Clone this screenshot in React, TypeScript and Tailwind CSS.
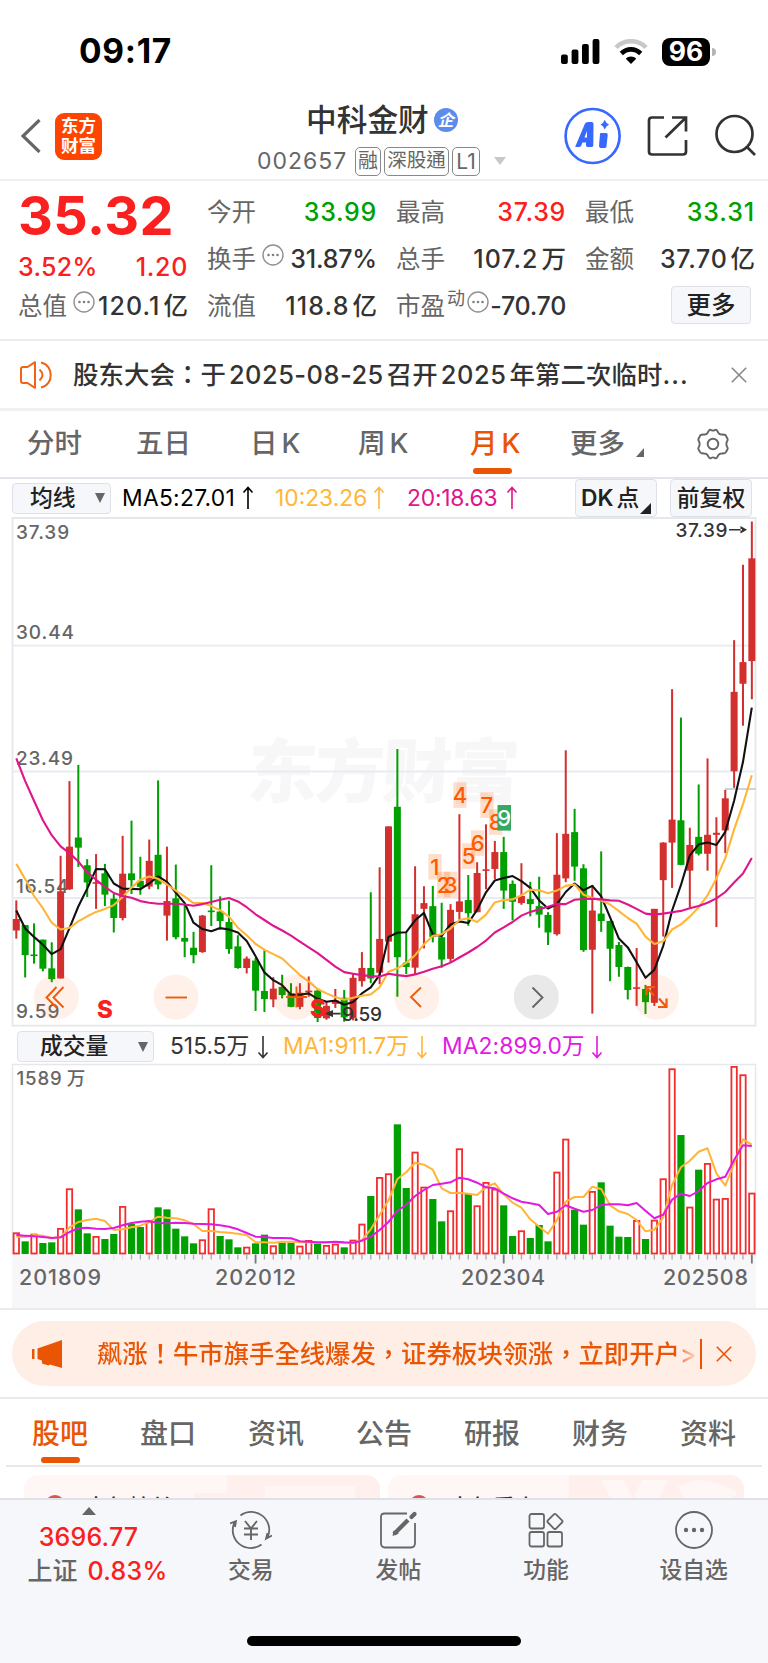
import React from "react";

const RED = "#d32f2f";
const GREEN = "#00a000";

/* [direction, high, bodyTop, bodyBottom, low] in chart sample units */
type Candle = [string, number, number, number, number];
const candles: Candle[] = [
  ["r", 1155, 1210, 1244, 1268], ["g", 1228, 1228, 1317, 1383], ["g", 1223, 1315, 1318, 1342], ["g", 1271, 1271, 1357, 1365],
  ["g", 1279, 1356, 1388, 1397], ["r", 1023, 1128, 1386, 1386], ["r", 802, 996, 1122, 1124], ["g", 754, 969, 999, 1056],
  ["g", 1033, 1051, 1102, 1145], ["r", 1018, 1101, 1104, 1180], ["g", 1047, 1075, 1138, 1172], ["g", 1135, 1150, 1207, 1250],
  ["r", 964, 1076, 1207, 1214], ["g", 919, 1075, 1095, 1136], ["g", 1026, 1097, 1115, 1138], ["r", 975, 1038, 1114, 1122],
  ["g", 800, 1020, 1108, 1122], ["r", 996, 1157, 1200, 1274], ["g", 1049, 1149, 1264, 1270], ["g", 1168, 1266, 1277, 1323],
  ["g", 1248, 1295, 1317, 1341], ["r", 1198, 1200, 1308, 1310], ["g", 1051, 1185, 1189, 1231], ["g", 1143, 1188, 1216, 1242],
  ["g", 1156, 1219, 1299, 1313], ["g", 1258, 1291, 1355, 1357], ["r", 1321, 1327, 1355, 1371], ["g", 1325, 1333, 1422, 1482],
  ["g", 1302, 1423, 1447, 1485], ["r", 1382, 1416, 1448, 1471], ["g", 1375, 1411, 1435, 1445], ["g", 1400, 1430, 1470, 1471],
  ["r", 1400, 1428, 1470, 1477], ["r", 1380, 1422, 1426, 1440], ["g", 1418, 1422, 1503, 1515], ["r", 1454, 1467, 1504, 1508],
  ["r", 1417, 1451, 1461, 1473], ["g", 1420, 1443, 1501, 1514], ["r", 1373, 1384, 1504, 1510], ["r", 1308, 1355, 1394, 1410],
  ["g", 1131, 1355, 1386, 1400], ["r", 1057, 1269, 1369, 1403], ["r", 936, 936, 1277, 1339], ["g", 707, 878, 1323, 1440],
  ["g", 1250, 1339, 1352, 1373], ["r", 1054, 1196, 1354, 1375], ["r", 1113, 1163, 1180, 1297], ["g", 1112, 1172, 1263, 1279],
  ["g", 1162, 1264, 1330, 1354], ["r", 1166, 1183, 1328, 1339], ["r", 900, 1158, 1189, 1217], ["g", 1080, 1154, 1193, 1230],
  ["r", 1042, 1074, 1190, 1190], ["r", 930, 1063, 1067, 1122], ["r", 979, 1012, 1062, 1092], ["g", 967, 1012, 1126, 1180],
  ["g", 1096, 1106, 1159, 1214], ["r", 1045, 1142, 1163, 1168], ["g", 1100, 1151, 1166, 1202], ["g", 1085, 1172, 1197, 1236],
  ["g", 1190, 1198, 1250, 1287], ["r", 956, 1079, 1255, 1259], ["r", 711, 958, 1090, 1101], ["g", 884, 953, 1055, 1097],
  ["g", 1048, 1060, 1302, 1307], ["r", 1110, 1185, 1301, 1490], ["g", 1010, 1194, 1216, 1248], ["g", 1215, 1216, 1298, 1394],
  ["g", 1278, 1287, 1352, 1381], ["g", 1351, 1352, 1420, 1448], ["r", 1296, 1412, 1416, 1467], ["g", 1405, 1417, 1456, 1491],
  ["r", 1180, 1180, 1458, 1467], ["r", 983, 984, 1095, 1262], ["r", 530, 916, 984, 1118], ["g", 614, 918, 1050, 1051],
  ["r", 940, 991, 1067, 1176], ["g", 812, 967, 1017, 1022], ["r", 735, 961, 1017, 1067], ["r", 909, 955, 961, 1234],
  ["r", 828, 853, 948, 1015], ["r", 385, 538, 773, 822], ["r", 162, 450, 514, 638], ["r", 34, 143, 447, 560],
];

const ma5 = [1185, 1238, 1263, 1286, 1314, 1299, 1237, 1173, 1120, 1062, 1063, 1105, 1120, 1121, 1122, 1105, 1084, 1100, 1132, 1163, 1221, 1240, 1246, 1237, 1241, 1250, 1275, 1320, 1368, 1391, 1406, 1434, 1434, 1430, 1446, 1455, 1451, 1464, 1456, 1430, 1412, 1375, 1263, 1251, 1249, 1214, 1192, 1256, 1260, 1226, 1217, 1222, 1183, 1131, 1096, 1089, 1083, 1098, 1118, 1155, 1179, 1166, 1130, 1105, 1125, 1112, 1143, 1205, 1268, 1294, 1338, 1384, 1360, 1290, 1185, 1110, 1022, 989, 984, 991, 952, 860, 745, 585];
const ma10 = [1047, 1092, 1142, 1178, 1221, 1241, 1236, 1217, 1202, 1189, 1180, 1169, 1145, 1117, 1094, 1084, 1091, 1108, 1126, 1144, 1163, 1163, 1172, 1184, 1203, 1236, 1258, 1284, 1301, 1314, 1327, 1351, 1376, 1395, 1417, 1430, 1441, 1449, 1443, 1437, 1433, 1412, 1366, 1356, 1340, 1317, 1285, 1260, 1255, 1238, 1213, 1208, 1219, 1197, 1161, 1154, 1152, 1140, 1123, 1125, 1134, 1126, 1112, 1108, 1138, 1147, 1155, 1167, 1187, 1207, 1224, 1262, 1284, 1276, 1241, 1226, 1203, 1175, 1140, 1090, 1030, 945, 870, 785];
const ma20 = [735, 802, 860, 918, 962, 995, 1015, 1040, 1072, 1094, 1115, 1133, 1142, 1147, 1157, 1162, 1165, 1165, 1165, 1167, 1171, 1166, 1160, 1153, 1148, 1158, 1175, 1196, 1213, 1230, 1244, 1259, 1277, 1294, 1311, 1331, 1351, 1367, 1372, 1376, 1379, 1380, 1372, 1376, 1379, 1374, 1366, 1357, 1350, 1339, 1324, 1309, 1293, 1274, 1250, 1235, 1219, 1200, 1189, 1181, 1174, 1166, 1166, 1153, 1151, 1150, 1152, 1155, 1156, 1167, 1180, 1194, 1197, 1194, 1190, 1186, 1178, 1172, 1162, 1149, 1130, 1102, 1075, 1030];

const volume = [637, 664, 641, 669, 667, 624, 505, 568, 640, 648, 657, 642, 558, 611, 621, 604, 562, 568, 626, 649, 670, 658, 565, 648, 658, 682, 680, 670, 644, 676, 668, 668, 677, 660, 670, 675, 671, 682, 659, 611, 528, 471, 460, 313, 504, 395, 500, 537, 604, 571, 385, 522, 556, 486, 506, 556, 648, 631, 654, 615, 664, 455, 356, 569, 614, 513, 487, 617, 650, 651, 600, 657, 599, 475, 145, 345, 560, 449, 429, 536, 534, 138, 163, 518];
const redVolume = new Set([0, 2, 5, 6, 9, 12, 15, 21, 22, 26, 29, 32, 33, 35, 36, 38, 39, 41, 42, 45, 46, 49, 50, 52, 53, 54, 57, 61, 62, 65, 70, 72, 73, 74, 76, 78, 79, 80, 81, 82, 83]);
const volMa1 = [650, 651, 645, 647, 654, 652, 622, 606, 600, 596, 603, 630, 628, 622, 617, 606, 590, 593, 595, 601, 612, 633, 633, 636, 638, 641, 646, 667, 667, 668, 665, 665, 667, 667, 668, 667, 667, 669, 668, 660, 628, 585, 541, 477, 457, 428, 434, 449, 505, 519, 518, 521, 525, 501, 490, 523, 548, 563, 598, 620, 641, 600, 545, 531, 531, 500, 507, 556, 574, 582, 600, 634, 629, 592, 495, 442, 422, 395, 385, 460, 497, 430, 358, 374];
const volMa2 = [645, 647, 649, 651, 654, 652, 636, 625, 623, 626, 627, 624, 616, 609, 605, 603, 609, 610, 608, 609, 611, 612, 613, 616, 620, 628, 639, 650, 651, 654, 654, 655, 664, 665, 667, 667, 665, 667, 668, 662, 650, 630, 606, 573, 554, 528, 510, 495, 491, 487, 473, 478, 488, 502, 505, 521, 535, 545, 550, 555, 582, 575, 556, 566, 575, 570, 555, 553, 553, 556, 549, 572, 595, 584, 539, 521, 528, 513, 489, 478, 470, 420, 376, 378];

const px = (i: number) => 16.3 + i * 8.862;
const py = (v: number) => 510 + v / 2.9585;
const vy = (v: number) => 1020 + v / 3;
const line = (data: number[], y: (v: number) => number) =>
  data.map((v, i) => `${px(i).toFixed(1)},${y(v).toFixed(1)}`).join(" ");
const isMajor = (i: number) => i === 27 || i === 55 || i === 83;

const signals = [
  { n: "1", x: 428.3, y: 854 }, { n: "2", x: 437, y: 871.7 }, { n: "3", x: 444, y: 871.7 },
  { n: "4", x: 453.3, y: 782.3 }, { n: "5", x: 462, y: 843.3 }, { n: "6", x: 471, y: 830.3 },
  { n: "7", x: 480.3, y: 792.3 }, { n: "8", x: 489, y: 809.3 },
];

function PriceChart() {
  return (
    <svg viewBox="0 517 768 510" className="block h-[510px] w-[768px]" fontFamily="Inter, sans-serif">
      <text x="250" y="797" fontFamily="'Noto Sans CJK SC', sans-serif" fontWeight="900" fontSize="70" fill="#f7f7f7" textLength="272" transform="translate(38 0) skewX(-3)">东方财富</text>
      <g stroke="#e8ebf2" strokeWidth="1.8" fill="none">
        <path d="M12.5 518H755.5V1025.6H12.5Z" stroke="#e6e7ec" />
        <path d="M12 645.6H756M12 771.5H756M12 898H756" />
      </g>
      <path d="M725 789H756" stroke="#cfd2d8" strokeWidth="2" />
      <g fontSize="19" fontWeight="500" fill="#666" letterSpacing="0.9">
        <text x="16" y="539">37.39</text>
        <text x="16" y="639">30.44</text>
        <text x="16" y="765">23.49</text>
        <text x="16" y="892.5">16.54</text>
        <text x="16" y="1018">9.59</text>
      </g>
      {candles.map(([d, h, t, b, l], i) => (
        <g key={i} fill={d === "r" ? RED : GREEN}>
          <rect x={px(i) - 1} y={py(h)} width="2" height={(l - h) / 2.9585} />
          <rect x={px(i) - 3.5} y={py(t)} width="7" height={Math.max(1.6, (b - t) / 2.9585)} />
        </g>
      ))}
      <g fill="none" strokeWidth="2.1" strokeLinejoin="round">
        <polyline points={line(ma5, py)} stroke="#111" />
        <polyline points={line(ma10, py)} stroke="#ffb638" />
        <polyline points={line(ma20, py)} stroke="#e0148c" />
      </g>
      <g fontSize="22" fontWeight="500" textAnchor="middle">
        {signals.map((s) => (
          <g key={s.n}>
            <rect x={s.x} y={s.y} width="13.3" height="25.6" fill="#ff6000" fillOpacity="0.2" />
            <text x={s.x + 6.6} y={s.y + 20.8} fill="#ff5a00">{s.n}</text>
          </g>
        ))}
        <rect x="497.5" y="805" width="13.5" height="25.6" fill="#36a862" />
        <text x="504.2" y="825.8" fill="#fff">9</text>
      </g>
      <g>
        {[56.3, 176, 296.3, 416.7, 656.3].map((x) => (
          <circle key={x} cx={x} cy="997" r="22.6" fill="#ff5a00" fillOpacity="0.085" />
        ))}
        <circle cx="536.3" cy="997" r="22.6" fill="#000" fillOpacity="0.085" />
      </g>
      <g fill="none" stroke="#f05a0a" strokeWidth="1.9">
        <path d="M56.5 987L46.5 997.5L56.500 1007.500M63.500 987L53.500 997.500L63.500 1007.500" />
        <path d="M165.500 997.500H187" />
        <path d="M286 997H307M296.500 986.500V1007.500" />
        <path d="M421 987.500L411 997L421 1007" />
        <path d="M654 995.500L647 987.500M646.500 995V987H655M659 998.500L666 1006.500M666.500 998.500V1007H658" strokeWidth="2.200" />
        <path d="M532.500 987.500L542.500 997.500L532.500 1007.500" stroke="#666" />
      </g>
      <g fontWeight="800" fontSize="24" fill="#fa2020">
        <text x="97" y="1018">S</text>
        <text x="310" y="1017">S</text>
      </g>
      <g fontSize="19" fontWeight="500" fill="#333">
        <path d="M325 1013.600L333 1010V1017.200ZM332 1012.800H340.500V1014.400H332Z" />
        <text x="342" y="1021" textLength="40">9.59</text>
        <text x="675.500" y="537" textLength="52">37.39</text>
        <path d="M747 529.700L740.500 526V533.400ZM729 528.900H742V530.500H729Z" />
      </g>
    </svg>
  );
}

function VolumeChart() {
  const base = 1254;
  return (
    <svg viewBox="0 1063 768 245" className="block h-[245px] w-[768px]" fontFamily="Inter, 'Noto Sans CJK SC', sans-serif">
      <rect x="12" y="1254" width="744" height="54" fill="#f7f7fa" />
      <path d="M12.500 1254V1064.500H755.500V1254" fill="none" stroke="#e6e7ec" strokeWidth="1.500" />
      <text x="16.500" y="1084.500" fontSize="18.600" fontWeight="500" fill="#666" letterSpacing="0.900">1589<tspan dx="4">万</tspan></text>
      {volume.map((v, i) =>
        redVolume.has(i) ? (
          <rect key={i} x={px(i) - 2.7} y={vy(v) + 0.9} width="5.400" height={base - vy(v) - 1.4} fill="#fff" stroke="#f22d2d" strokeWidth="1.800" />
        ) : (
          <rect key={i} x={px(i) - 3.6} y={vy(v)} width="7.200" height={base - vy(v)} fill={GREEN} />
        )
      )}
      <g strokeWidth="1.300">
        {volume.map((_, i) =>
          i > 10 ? (
            <path key={i} d={`M${px(i)} 1254.500V${isMajor(i) ? 1263.5 : 1259.5}`} opacity={i < 13 ? 0.3 : 1} stroke={isMajor(i) ? "#77777c" : "#a9a9ae"} strokeWidth={isMajor(i) ? 1.8 : 1.3} />
          ) : null
        )}
      </g>
      <g fill="none" strokeWidth="2" strokeLinejoin="round">
        <polyline points={line(volMa1, vy)} stroke="#ffb638" />
        <polyline points={line(volMa2, vy)} stroke="#e418e4" />
      </g>
      <g fontSize="21.500" fontWeight="500" fill="#666">
        <text x="19" y="1285" textLength="82">201809</text>
        <text x="215" y="1285" textLength="81">202012</text>
        <text x="461" y="1285" textLength="84">202304</text>
        <text x="663" y="1285" textLength="85">202508</text>
      </g>
    </svg>
  );
}

function InfoDot() {
  return (
    <svg viewBox="0 0 22 22" className="block size-[22px] shrink-0">
      <circle cx="11" cy="11" r="10" fill="none" stroke="#909090" strokeWidth="1.400" />
      <g fill="#808080"><circle cx="6.500" cy="11" r="1.300" /><circle cx="11" cy="11" r="1.300" /><circle cx="15.500" cy="11" r="1.300" /></g>
    </svg>
  );
}

function Cross({ className }: { className: string }) {
  return (
    <svg viewBox="0 0 16 16" className={className} fill="none" stroke="currentColor" strokeWidth="1.600">
      <path d="M.8.800 15.200 15.200M15.200.800.800 15.200" />
    </svg>
  );
}

function Arrow({ down = false, className = "" }: { down?: boolean; className?: string }) {
  return (
    <svg viewBox="0 0 12 24" className={`h-6 w-3 shrink-0 ${className}`} fill="none" stroke="currentColor" strokeWidth="1.600">
      {down ? <path d="M6 1V22.500M1.500 17.500 6 22.500 10.500 17.500" /> : <path d="M6 23V1.500M1.500 6.500 6 1.500 10.500 6.500" />}
    </svg>
  );
}

type StatProps = { label: string; value: string; unit?: string; tone?: string; spacing?: string; icon?: React.ReactNode; small?: string };

function Stat({ label, value, unit, tone = "text-[#333]", spacing = "tracking-[0.700px]", icon, small }: StatProps) {
  return (
    <div className="flex h-[47px] items-center">
      <span className="text-[24.500px] text-[#666]">{label}</span>
      {small && <span className="-mt-4 ml-0.5 text-[18px] text-[#666]">{small}</span>}
      {icon}
      <span className={`ml-auto text-[25px] font-medium ${tone}`}>
        <span className={spacing}>{value}</span>
        {unit && <span className="ml-[3px] text-[24.500px]">{unit}</span>}
      </span>
    </div>
  );
}

function StatusBar() {
  return (
    <div className="flex h-[93px] shrink-0 items-start justify-between pt-[33px] pr-[52px] pl-[79px]">
      <span className="text-[33.500px] leading-[36px] font-bold tracking-[0.700px] text-black">09:17</span>
      <div className="mt-1 flex h-[29px] items-center">
        <svg viewBox="0 0 39 26" className="mr-[14px] h-[26px] w-[39px]">
          <rect y="15.500" width="6.800" height="9.500" rx="2" /><rect x="10.600" y="10.500" width="6.800" height="14.500" rx="2" /><rect x="21" y="5" width="6.800" height="20" rx="2" /><rect x="31.600" width="6.800" height="25" rx="2" />
        </svg>
        <svg viewBox="0 0 34 26" className="mr-[14px] h-[26px] w-[34px]" fill="none">
          <path d="M2 8.500C10 .2 24 .2 32 8.500" stroke="#c8c8c8" strokeWidth="4.600" />
          <path d="M7.300 14.500C13 9 21 9 26.700 14.500" stroke="#000" strokeWidth="4.600" />
          <path d="M17 25 11.800 19.800C14.500 16.800 19.500 16.800 22.200 19.800Z" fill="#000" />
        </svg>
        <span className="flex h-7 w-[48px] items-center justify-center rounded-[8px] bg-black text-[26.500px] leading-none font-bold text-white">96</span>
        <span className="ml-0.5 h-2 w-1 rounded-r-full bg-[#b5b5b5]" />
      </div>
    </div>
  );
}

function Header() {
  return (
    <div className="grid h-[88px] shrink-0 grid-cols-[238px_286px_244px] border-b-2 border-[#efefef]">
      <div className="flex items-center pl-[21px]">
        <svg viewBox="0 0 20 34" className="h-[34px] w-5" fill="none" stroke="#666" strokeWidth="3.200"><path d="M18.500 1 2 17 18.500 33" /></svg>
        <div className="ml-3.5 flex size-[47px] flex-col items-center justify-center rounded-[9px] bg-[#ff4400] pb-px text-[17.500px] leading-[19.500px] font-bold text-white">
          <span>东方</span><span>财富</span>
        </div>
      </div>
      <div className="pt-[9px] pl-[19px]">
        <div className="flex h-[36px] items-center pl-[49px]">
          <span className="text-[30.700px] leading-none font-medium text-[#333]">中科金财</span>
          <span className="ml-[5px] flex size-6 items-center justify-center rounded-full bg-[#5c8cec] text-[16px] leading-none font-bold text-white italic">企</span>
        </div>
        <div className="mt-[8px] flex h-[30px] items-center font-['Inter','Noto_Sans_CJK_TC',sans-serif] text-[#666]">
          <span className="w-[98px] text-[23px] tracking-[1px]">002657</span>
          <span className="mr-[3px] flex h-[29px] w-[26px] items-center justify-center rounded-[5px] border-[1.500px] border-[#888] text-[20px] leading-none">融</span>
          <span className="mr-[3px] flex h-[29px] w-[65px] items-center justify-center rounded-[5px] border-[1.500px] border-[#888] text-[19.500px] leading-none">深股通</span>
          <span className="flex h-[29px] w-[28px] items-center justify-center rounded-[5px] border-[1.500px] border-[#888] text-[21px] leading-none">L1</span>
          <svg viewBox="0 0 12 8" className="ml-3.5 h-2 w-3"><path d="M0 0H12L6 8Z" fill="#c8c8c8" /></svg>
        </div>
      </div>
      <div className="flex items-center pl-[26px]">
        <svg viewBox="550 106 218 60" className="h-[60px] w-[218px] shrink-0" fill="none" stroke="#333" strokeWidth="2.700">
          <circle cx="592.600" cy="136" r="27" stroke="#3769ff" />
          <path fill="#3769ff" stroke="none" fillRule="evenodd" d="M575.300 146.500 585 123.500Q586 122 588 122H592Q593.500 122.500 593.500 124L593.300 145.500Q593 147 591.500 147H587.500Q586 146.500 586 145.500V142.500H582.500L581 146Q580.300 147 579 147H576Q575 147 575.300 146.500ZM584.500 137.500H587V131Z" />
          <path fill="#3769ff" stroke="none" d="M600.500 133H606Q608 133.200 607.700 135L606.500 146.500Q606 148 604.500 148H600.500Q599 147.500 599 146L600 134ZM604.800 119.700Q606 123.500 609 124.600Q606 126 604.800 129.500Q603.500 126 600.500 124.600Q603.500 123.500 604.800 119.700Z" />
          <path d="M664 117.500H652Q649 117.500 649 120.500V151.500Q649 154.500 652 154.500H683Q686 154.500 686 151.500V140M672 117.500H686V131.500M685 118.500 665.500 137.500" />
          <circle cx="734.500" cy="134" r="18" /><path d="M747 147 755 155" />
        </svg>
      </div>
    </div>
  );
}

function Tri({ className }: { className: string }) {
  return <svg viewBox="0 0 10 10" className={className}><path d="M0 0H10L5 10Z" fill="#666" /></svg>;
}

const mainTabs = [
  { t: "分时", w: "w-[110px] pl-[27px]" }, { t: "五日", w: "w-[116px] pl-[26px]" }, { t: "日K", w: "w-[107px] pl-[24px]" },
  { t: "周K", w: "w-[112px] pl-[25px]" }, { t: "月K", w: "w-[99px] pl-[25px]" },
];

const news = ["股吧", "盘口", "资讯", "公告", "研报", "财务", "资料"];

export default function App() {
  return (
    <div className="flex h-[1663px] w-[768px] flex-col overflow-hidden bg-white font-['Inter','Noto_Sans_CJK_SC',sans-serif] leading-none whitespace-nowrap text-[#333]">
      <StatusBar />
      <Header />

      <section className="grid h-[160px] shrink-0 grid-cols-[170px_169px_169px_169px] gap-x-5 border-b-2 border-[#ececec] pt-[8px] pl-[18px]">
        <div>
          <div className="flex h-[54px] items-center text-[54px] font-bold tracking-[0.400px] text-[#fa2020]">35.32</div>
          <div className="flex h-[40px] items-center justify-between pt-2 text-[25px] font-medium text-[#fa2020]"><span className="tracking-[0.300px]">3.52%</span><span className="tracking-[0.700px]">1.20</span></div>
          <Stat label="总值" icon={<span className="-mt-2.5 ml-1.5"><InfoDot /></span>} value="120.1" unit="亿" spacing="tracking-[1.100px]" />
        </div>
        <div className="-ml-px">
          <Stat label="今开" value="33.99" tone="text-[#00a000]" />
          <Stat label="换手" icon={<span className="-mt-2.5 ml-1.5"><InfoDot /></span>} value="31.87%" spacing="tracking-[-0.200px]" />
          <Stat label="流值" value="118.8" unit="亿" spacing="tracking-[1.100px]" />
        </div>
        <div className="-ml-px">
          <Stat label="最高" value="37.39" tone="text-[#fa2020]" />
          <Stat label="总手" value="107.2" unit="万" spacing="tracking-[1px]" />
          <Stat label="市盈" small="动" icon={<span className="-mt-2.5 ml-0.5"><InfoDot /></span>} value="-70.70" spacing="tracking-[-0.300px]" />
        </div>
        <div className="-ml-px">
          <Stat label="最低" value="33.31" tone="text-[#00a000]" spacing="tracking-[0.900px]" />
          <Stat label="金额" value="37.70" unit="亿" />
          <div className="flex justify-end pt-[3px] pr-1">
            <span className="flex h-[38px] w-[80px] items-center justify-center rounded-[4px] border-[1.500px] border-[#dfe1e8] bg-[#f6f7fa] text-[24.500px] font-medium text-[#222]">更多</span>
          </div>
        </div>
      </section>

      <section className="flex h-[70px] shrink-0 items-center border-b-[3px] border-[#f0f0f0] pl-5">
        <svg viewBox="0 0 32 28" className="h-7 w-8" fill="none" stroke="#f06414" strokeWidth="2" strokeLinejoin="round">
          <path d="M15 1.200V26.800L7.500 22H3Q1 22 1 20V8Q1 6 3 6H7.500ZM19.500 8.500Q25.500 14 19.500 19.500M21 1.500C34 4 34 24 21 26.500" />
        </svg>
        <span className="ml-[21px] w-[652px] font-['Inter','Noto_Sans_CJK_TC',sans-serif] text-[25.400px] font-medium tracking-[0.100px]">股东大会：于<span className="mx-[3px] tracking-[0.500px]">2025-08-25</span>召开<span className="mx-[3px] tracking-[0.600px]">2025</span>年第二次临时<span className="tracking-[1px]">...</span></span>
        <Cross className="ml-1.5 size-4 text-[#888]" />
      </section>

      <section className="flex h-[68px] shrink-0 border-b-2 border-[#e3e5ec] text-[27.500px] text-[#666]">
        {mainTabs.map(({ t, w }, i) => (
          <div key={t} className={`${w} flex flex-col items-start ${i === 4 ? "text-[#ea5504]" : ""}`}>
            <span className="flex h-[57px] items-center pt-[9px] font-medium">{t[1] === "K" ? <>{t[0]}<span className="ml-[4px]">K</span></> : t}</span>
            {i === 4 && <span className="ml-[3px] h-1.5 w-[39px] rounded-full bg-[#ea5504]" />}
          </div>
        ))}
        <div className="flex h-[57px] w-[153px] items-center pt-[9px] pl-[26px] font-medium">更多
          <svg viewBox="0 0 8 9" className="mt-4 ml-[11px] h-[9px] w-2"><path d="M8 0V9H0Z" fill="#666" /></svg>
        </div>
        <svg viewBox="0 0 32 32" className="mt-[17px] size-8" fill="none" stroke="#666" strokeWidth="1.900" strokeLinejoin="round">
          <path d="M12 2.500Q13 1.200 14.200 2Q16 3.300 17.800 2Q19 1.200 20 2.500L21.500 5Q22.500 6.800 24.800 6.500L27.500 6.800Q28.700 7 29 8L30.500 10.800Q31 12 30.200 13Q28.500 16 30.200 19Q31 20 30.500 21.200L29 24Q28.500 25.200 27.300 25.300L24.800 25.500Q22.500 25.500 21.500 27L20 29.500Q19 30.800 17.800 30Q16 28.700 14.200 30Q13 30.800 12 29.500L10.500 27Q9.500 25.500 7.200 25.500L4.700 25.300Q3.500 25.200 3 24L1.500 21.200Q1 20 1.800 19Q3.500 16 1.800 13Q1 12 1.500 10.800L3 8Q3.300 7 4.500 6.800L7.200 6.500Q9.500 6.800 10.500 5Z" />
          <circle cx="16" cy="16" r="5.300" />
        </svg>
      </section>

      <section className="flex h-[38px] shrink-0 items-center pl-3 text-[22.800px]">
        <div className="flex h-[31px] w-[99px] items-center justify-between rounded-[4px] border-[1.500px] border-[#dfe1e8] bg-[#f6f7fa] pr-[5px] pl-[17px] font-medium text-[#222]">均线<Tri className="size-2.5" /></div>
        <span className="ml-[11px] w-[120px] tracking-[0.300px] text-black">MA5:27.01</span>
        <Arrow className="text-black" />
        <span className="ml-[21px] w-[98px] text-[#ffb638]">10:23.26</span>
        <Arrow className="text-[#ffb638]" />
        <span className="ml-[22px] w-[99px] tracking-[-0.200px] text-[#e0148c]">20:18.63</span>
        <Arrow className="text-[#e0148c]" />
        <div className="mr-[13px] ml-auto flex h-[38px] w-[82px] items-center rounded-[4px] border-[1.500px] border-[#dfe1e8] bg-[#f6f7fa] pl-[5px] font-semibold text-[#222]">DK<span className="ml-[3px] font-medium">点</span>
          <svg viewBox="0 0 10 10" className="mt-5 ml-px size-[11px] shrink-0"><path d="M10 0V10H0Z" fill="#222" /></svg>
        </div>
        <div className="mr-4 flex h-[38px] w-[82px] items-center justify-center rounded-[4px] border-[1.500px] border-[#dfe1e8] bg-[#f6f7fa] font-medium text-[#222]">前复权</div>
      </section>

      <div className="shrink-0"><PriceChart /></div>

      <section className="flex h-[36px] shrink-0 items-center pt-[3px] pl-[17px] text-[22.800px]">
        <div className="flex h-[31px] w-[137px] items-center justify-between rounded-[4px] border-[1.500px] border-[#dfe1e8] bg-[#f6f7fa] pr-[5px] pl-[22px] font-medium text-[#222]">成交量<Tri className="size-2.5" /></div>
        <span className="ml-[16px] w-[87px]">515.5万</span>
        <Arrow down />
        <span className="ml-[14px] w-[133px] text-[#ffb638]">MA1:911.7万</span>
        <Arrow down className="text-[#ffb638]" />
        <span className="ml-[14px] w-[149px] tracking-[0.100px] text-[#e418e4]">MA2:899.0万</span>
        <Arrow down className="text-[#e418e4]" />
      </section>

      <div className="shrink-0"><VolumeChart /></div>

      <section className="shrink-0 border-y-2 border-[#ebebee] px-3 pt-[11px] pb-[11px]">
        <div className="flex h-[65px] items-center rounded-[33px] bg-[#feeee6] pl-[19px] text-[#ea5504]">
          <svg viewBox="0 0 32 28" className="h-7 w-8 shrink-0" fill="currentColor"><path d="M1 9H3.500V19H1ZM6.500 8.500 31 0V28L19 24.500 17.500 25.500 11 23.500V20.500L6.500 19Z" /></svg>
          <span className="ml-[34px] w-[603px] overflow-hidden bg-gradient-to-r from-[#ea5504] from-96% to-[#feeee6] bg-clip-text py-1 font-['Inter','Noto_Sans_CJK_TC',sans-serif] text-[25.350px] font-medium text-transparent">飙涨！牛市旗手全线爆发，证券板块领涨，立即开户&gt;</span>
          <span className="h-[30px] w-[1.500px] bg-current" />
          <Cross className="ml-[14px] size-4" />
        </div>
      </section>

      <section className="mx-1.5 flex h-[68px] shrink-0 border-b-2 border-[#e8e8ea] pl-[26px]">
        {news.map((t, i) => (
          <div key={t} className={`flex w-[108px] shrink-0 flex-col items-start text-[28px] font-medium ${i === 0 ? "text-[#ea5504]" : "text-[#666]"}`}>
            <span className="flex h-[58px] items-center pt-3">{t}</span>
            {i === 0 && <span className="ml-[9px] h-1.5 w-[39px] rounded-full bg-[#ea5504]" />}
          </div>
        ))}
      </section>

      <section className="flex h-[31px] shrink-0 gap-2 overflow-hidden px-6 pt-2">
        {["本年榜单", "本年看点"].map((t, i) => (
          <div key={t} className="relative h-[80px] w-[356px] overflow-hidden rounded-[14px] bg-[#fff7f5]">
            <svg viewBox="0 0 356 80" className="absolute inset-0 h-full w-full">
              {i === 0 ? (
                <>
                  <path d="M203 0H356V80H170V18H203Z" fill="#fff0ee" />
                  <path d="M241 11H331V80H241Z" fill="#fff6f4" />
                </>
              ) : (
                <>
                  <path d="M181 0H356V80H181Z" fill="#fff0ee" />
                  <path d="M213 5H236L245 24 254 5H280L262 40H232ZM290 12Q315 -4 350 18L335 30H300Z" fill="#fff7f5" />
                </>
              )}
            </svg>
            <div className="relative flex items-start pt-5 pl-[21px] text-[22px]">
              <span className="mr-5 size-5 shrink-0 rounded-full bg-[#e0524c]" />
              <span className="pt-px font-medium">{t}</span>
            </div>
          </div>
        ))}
      </section>

      <footer className="flex grow flex-col border-t-2 border-[#e0e1e6] bg-[#f6f7fa] text-[#666]">
        <div className="flex h-[100px]">
          <div className="flex w-[177px] flex-col items-center pt-[7px]">
            <svg viewBox="0 0 14 8" className="h-[8px] w-3.5"><path d="M7 0 14 8H0Z" fill="#666" /></svg>
            <span className="mt-[10px] text-[25px] font-medium tracking-[0.200px] text-[#fa2020]">3696.77</span>
            <span className="mt-[9px] ml-[18px] flex items-center text-[25px] font-medium">上证<span className="ml-2.5 tracking-[0.300px] text-[#fa2020]">0.83%</span></span>
          </div>
          {[0, 1, 2, 3].map((k) => (
            <div key={k} className="flex w-[147.600px] flex-col items-center pt-[10px]">
              <svg viewBox="0 0 42 40" className="h-10 w-[42px]" fill="none" stroke="currentColor" strokeWidth="1.800">
                {k === 0 && <>
                  <path d="M10.500 5.500A18 18 0 0 1 38 26.500L36 28.500M42 25.500 36 28.800 37.500 23M31.500 34.500A18 18 0 0 1 4 13.500L6 11M0 13.500 6 11.200 5 17" />
                  <path d="M15 11 21 18.500 27 11M21 18.500V30M14 18.500H28M14 24.500H28" strokeWidth="1.900" />
                </>}
                {k === 1 && <>
                  <path d="M30 3.500H7.500Q4 3.500 4 7V33Q4 37.500 8 37.500H34Q38 37.500 38 33V13" />
                  <path d="M17 24 31 10" strokeWidth="4.200" /><path d="M34.500 7 37.500 4" strokeWidth="4.200" strokeLinecap="round" /><path d="M14.500 21.500 13.500 27 20 24.500Z" fill="currentColor" stroke="none" transform="translate(2 -1)" />
                </>}
                {k === 2 && <>
                  <rect x="4.500" y="4" width="14.500" height="14.500" rx="2" /><rect x="4.500" y="22" width="14.500" height="14.500" rx="2" /><rect x="22.500" y="22" width="14.500" height="14.500" rx="2" />
                  <rect x="24.200" y="5.700" width="11.500" height="11.500" rx="1.500" transform="rotate(45 29.950 11.450)" />
                </>}
                {k === 3 && <>
                  <circle cx="21" cy="20" r="18" />
                  <g fill="currentColor" stroke="none"><circle cx="13" cy="20" r="2.200" /><circle cx="21" cy="20" r="2.200" /><circle cx="29" cy="20" r="2.200" /></g>
                </>}
              </svg>
              <span className="mt-[9px] text-[22.800px] font-medium">{["交易", "发帖", "功能", "设自选"][k]}</span>
            </div>
          ))}
        </div>
        <div className="mt-9 ml-[247px] h-[10px] w-[274px] rounded-full bg-black" />
      </footer>
    </div>
  );
}
